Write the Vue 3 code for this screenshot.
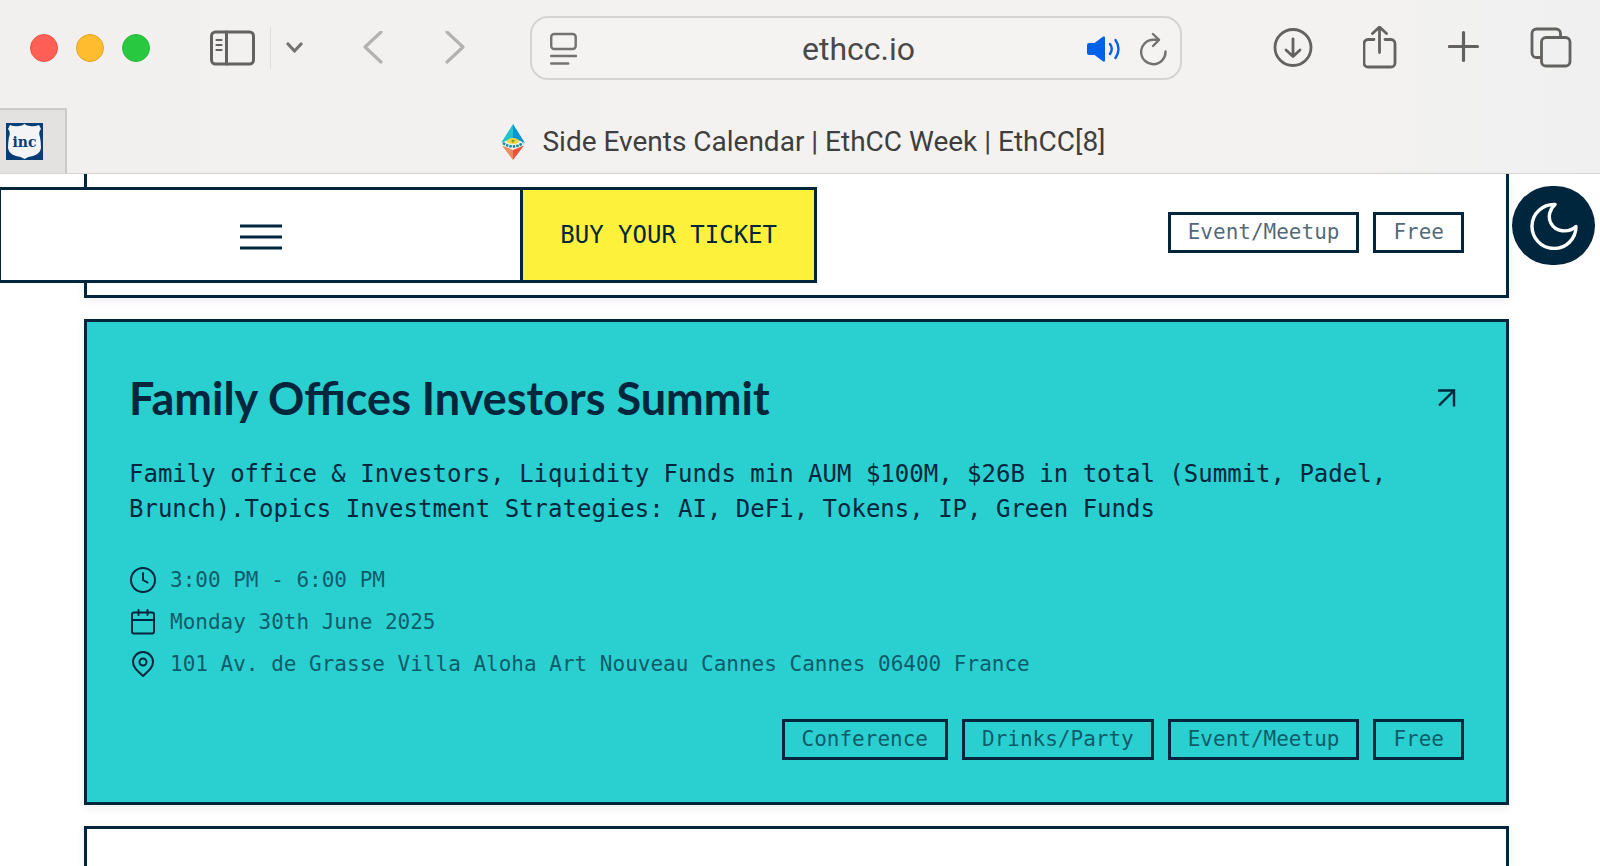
<script setup>
import { ref } from 'vue'

const address = ref('ethcc.io')
const pageTitle = 'Side Events Calendar | EthCC Week | EthCC[8]'

const previousTags = ['Event/Meetup', 'Free']

const event = {
    title: 'Family Offices Investors Summit',
    description: 'Family office & Investors, Liquidity Funds min AUM $100M, $26B in total (Summit, Padel, Brunch).Topics Investment Strategies: AI, DeFi, Tokens, IP, Green Funds',
    time: '3:00 PM - 6:00 PM',
    date: 'Monday 30th June 2025',
    place: '101 Av. de Grasse Villa Aloha Art Nouveau Cannes Cannes 06400 France',
    tags: ['Conference', 'Drinks/Party', 'Event/Meetup', 'Free']
}
</script>

<template>
    <div class="window">
        <header class="chrome">
            <div class="toolbar">
                <div class="toolbar-left">
                    <div class="lights">
                        <button class="light red" aria-label="Close"></button>
                        <button class="light yellow" aria-label="Minimize"></button>
                        <button class="light green" aria-label="Zoom"></button>
                    </div>
                    <div class="sidebar-group">
                        <button aria-label="Sidebar">
                            <svg width="45" height="36" viewBox="0 0 45 36" fill="none" stroke="#636261" stroke-width="3" stroke-linecap="round">
                                <rect x="1.5" y="2" width="42" height="32" rx="4" />
                                <path d="M16.5 2v32" />
                                <path d="M6.500 10h5M6.500 15h5M6.500 20h5" stroke-width="2.2" />
                            </svg>
                        </button>
                        <span class="divider"></span>
                        <button aria-label="Tab groups">
                            <svg width="17" height="12" viewBox="0 0 17 12" fill="none" stroke="#737271" stroke-width="3.2" stroke-linecap="round" stroke-linejoin="round">
                                <path d="M2 2l6.5 7L15 2" />
                            </svg>
                        </button>
                    </div>
                    <div class="history">
                        <button aria-label="Back">
                            <svg width="20" height="34" viewBox="0 0 20 34" fill="none" stroke="#b3b2b1" stroke-width="3.2" stroke-linecap="round" stroke-linejoin="round">
                                <path d="M18 1L2 16l16 15" />
                            </svg>
                        </button>
                        <button aria-label="Forward">
                            <svg width="20" height="34" viewBox="0 0 20 34" fill="none" stroke="#b3b2b1" stroke-width="3.2" stroke-linecap="round" stroke-linejoin="round">
                                <path d="M2 1l16 15L2 31" />
                            </svg>
                        </button>
                    </div>
                </div>

                <div class="address">
                    <button aria-label="Page menu">
                        <svg width="27" height="34" viewBox="0 0 27 34" fill="none" stroke="#737271" stroke-width="2.4" stroke-linecap="round">
                            <rect x="1.2" y="3" width="24.5" height="15" rx="3" />
                            <path d="M1.2 25h25M1.2 32.5h17" />
                        </svg>
                    </button>
                    <input v-model="address" type="text" aria-label="Address" />
                    <div class="address-actions">
                        <button aria-label="Mute tab">
                            <svg width="34" height="28" viewBox="0 0 34 28" fill="none" stroke="#0062e6" stroke-linecap="round">
                                <path d="M2 9h5.5L15.500 3Q18 1.200 18 4v22q0 2.800-2.500 1L7.500 21H2q-2 0-2-2v-8q0-2 2-2z" fill="#0062e6" stroke="none" />
                                <path d="M23 10q3.500 5 0 10M28.500 6q6 9 0 18" stroke-width="2.4" />
                            </svg>
                        </button>
                        <button aria-label="Reload">
                            <svg width="27" height="36" viewBox="0 0 27 36" fill="none" stroke="#737271" stroke-width="2.4" stroke-linecap="round" stroke-linejoin="round">
                                <path d="M25.500 21.500A12.200 12.200 0 1 1 13.500 9.800H18.500" />
                                <path d="M13 4l6 5.800-6 6.200" />
                            </svg>
                        </button>
                    </div>
                </div>

                <div class="toolbar-right">
                    <button aria-label="Downloads">
                        <svg width="40" height="44" viewBox="0 0 40 44" fill="none" stroke="#636261" stroke-width="2.8" stroke-linecap="round" stroke-linejoin="round">
                            <circle cx="20" cy="21.5" r="18" />
                            <path d="M20 13v17M13 24l7 6.500 7-6.500" />
                        </svg>
                    </button>
                    <button aria-label="Share">
                        <svg width="36" height="44" viewBox="0 0 36 44" fill="none" stroke="#636261" stroke-width="2.8" stroke-linecap="round" stroke-linejoin="round">
                            <path d="M11 13.500H5a4 4 0 0 0-4 4V37a4 4 0 0 0 4 4h23a4 4 0 0 0 4-4V17.500a4 4 0 0 0-4-4h-6" />
                            <path d="M16.500 26.500V1M9.500 7.500L16.500 1l7 6.500" />
                        </svg>
                    </button>
                    <button aria-label="New tab">
                        <svg width="32" height="44" viewBox="0 0 32 44" fill="none" stroke="#636261" stroke-width="3.2" stroke-linecap="round">
                            <path d="M15.500 6.500v28M1.500 20.500h28" />
                        </svg>
                    </button>
                    <button aria-label="Tab overview">
                        <svg width="42" height="44" viewBox="0 0 42 44" fill="none" stroke="#636261" stroke-width="2.8" stroke-linecap="round">
                            <rect x="11.5" y="11.5" width="28.5" height="28.5" rx="4.5" />
                            <path d="M11.500 31.500H6.500A4.500 4.500 0 0 1 2 27V7.500A4.500 4.500 0 0 1 6.500 3H26a4.500 4.500 0 0 1 4.500 4.500v4" />
                        </svg>
                    </button>
                </div>
            </div>

            <div class="tabs">
                <a class="pinned-tab" href="#" aria-label="Inc">
                    <span class="inc">
                        <svg width="37" height="37" viewBox="0 0 37 37" aria-hidden="true">
                            <path fill="#f4f4f6" d="M4 2q5 2 9 1 3 0 5.500-2Q21 3 24 3q4 1 9-1l2 4q-3 3-1 8 1 5 1 11-1 6-8 8-5 .5-8.500 3Q15 33.500 10 33q-7-2-8-8 0-6 1-11 2-5-1-8z" />
                        </svg>
                        <span class="inc-text">inc</span>
                    </span>
                </a>
                <a class="tab" href="#">
                    <svg width="24" height="36" viewBox="0 0 24 36" aria-hidden="true">
                        <path fill="#22c3cb" d="M12 0L0 19l12-3z" />
                        <path fill="#0795d4" d="M12 0l12 19-12-3z" />
                        <path fill="#f1f3e8" d="M0 19l12-5 12 5-12 8z" />
                        <path fill="#ee8a5f" d="M1 21.500l11 4.500V36z" />
                        <path fill="#ef5138" d="M23 21.500L12 26v10z" />
                        <path fill="none" stroke="#198a99" stroke-width="2.5" stroke-dasharray="2.5 1" d="M2 19q10 7 20 0" />
                        <ellipse cx="12" cy="17" rx="6" ry="3" fill="#f5d43b" />
                        <circle cx="12" cy="17" r="1.5" fill="#8c9a35" />
                    </svg>
                    <span>{{ pageTitle }}</span>
                </a>
            </div>
        </header>

        <main class="page">
            <nav class="site-nav">
                <button class="menu" aria-label="Menu">
                    <svg width="42" height="26" viewBox="0 0 42 26" stroke="#00263d" stroke-width="2.8">
                        <path d="M0 2h42M0 13h42M0 24h42" />
                    </svg>
                </button>
                <a class="ticket" href="#">BUY YOUR TICKET</a>
            </nav>
            <button class="theme" aria-label="Dark mode">
                <svg width="48" height="48" viewBox="0 0 48 48" fill="none" stroke="#fff" stroke-width="3.4" stroke-linejoin="round">
                    <path d="M25 2.500A22 22 0 1 0 46 24.500C38 31.500 25.500 30 20.800 21 17.500 14.500 20 7 25 2.500z" />
                </svg>
            </button>

            <article class="card card-before">
                <ul class="tags">
                    <li v-for="tag in previousTags" :key="tag">{{ tag }}</li>
                </ul>
            </article>

            <article class="card card-event">
                <div class="card-head">
                    <h2>{{ event.title }}</h2>
                    <a href="#" aria-label="Open event">
                        <svg width="18" height="18" viewBox="0 0 18 18" fill="none" stroke="#00263d" stroke-width="2.4">
                            <path d="M0 1.500h16v16M16 1.500L1 16.500" />
                        </svg>
                    </a>
                </div>
                <p class="description">{{ event.description }}</p>
                <ul class="details">
                    <li>
                        <svg width="26" height="26" viewBox="0 0 26 26" fill="none" stroke="#00263d" stroke-width="2" stroke-linecap="round">
                            <circle cx="13" cy="13" r="12" />
                            <path d="M13 6v7l4.500 2.500" />
                        </svg>
                        <span>{{ event.time }}</span>
                    </li>
                    <li>
                        <svg width="26" height="26" viewBox="0 0 26 26" fill="none" stroke="#00263d" stroke-width="2" stroke-linecap="round">
                            <rect x="2" y="3.5" width="22" height="21" rx="2" />
                            <path d="M2 11h22M8.500 1v5M17.500 1v5" />
                        </svg>
                        <span>{{ event.date }}</span>
                    </li>
                    <li>
                        <svg width="26" height="26" viewBox="0 0 26 26" fill="none" stroke="#00263d" stroke-width="2" stroke-linejoin="round">
                            <path d="M13 1a10 10 0 0 1 10 10c0 5-4 8.500-10 14C7 19.500 3 16 3 11A10 10 0 0 1 13 1z" />
                            <circle cx="13" cy="11" r="3.5" />
                        </svg>
                        <span>{{ event.place }}</span>
                    </li>
                </ul>
                <ul class="tags">
                    <li v-for="tag in event.tags" :key="tag">{{ tag }}</li>
                </ul>
            </article>

            <article class="card card-after"></article>
        </main>
    </div>
</template>

<style>
body {
    margin: 0;
    background: #fff;
}
</style>

<style scoped>
.window {
    display: flex;
    flex-direction: column;
    height: 100vh;
    overflow: hidden;
    color: #00263d;
    font-family: "DejaVu Sans Mono", monospace;
}

button {
    display: block;
    padding: 0;
    border: none;
    background: none;
    color: inherit;
}

a {
    color: inherit;
    text-decoration: none;
}

svg {
    display: block;
    flex: none;
}

ul {
    margin: 0;
    padding: 0;
    list-style: none;
}

.chrome {
    flex: none;
    border-bottom: 1px solid #d6d5d5;
    background: linear-gradient(90deg, #f1f0ef, #f3f2f1 50%, #f3f2f1 85%, #f0f0f0);
    color: #3f3e3e;
    font-family: Roboto, sans-serif;
}

.toolbar {
    display: grid;
    grid-template-columns: 530px 1fr 418px;
    align-items: center;
    padding: 16px 0;
}

.toolbar-left,
.lights,
.sidebar-group,
.history,
.toolbar-right {
    display: flex;
    align-items: center;
}

.toolbar-left {
    padding-left: 30px;
}

.lights {
    gap: 18px;
    margin-right: 60px;
}

.light {
    width: 28px;
    height: 28px;
    border-radius: 50%;
}

.red {
    border: 1px solid #e9544b;
    background: #ff5f57;
}

.yellow {
    border: 1px solid #e5a32b;
    background: #febc2e;
}

.green {
    border: 1px solid #25bc3a;
    background: #28c840;
}

.sidebar-group {
    gap: 15px;
    margin-right: 60px;
}

.divider {
    width: 1px;
    height: 42px;
    background: #dfdede;
}

.history {
    gap: 62px;
}

.address {
    display: grid;
    grid-template-columns: 80px 1fr 80px;
    align-items: center;
    box-sizing: border-box;
    height: 64px;
    padding: 0 13px 0 18px;
    border: 2px solid #d5d4d3;
    border-radius: 18px;
    background: #f4f3f2;
}

.address input {
    min-width: 0;
    padding: 2px 0 0;
    border: none;
    outline: none;
    background: transparent;
    color: #4a4949;
    font: 32px/36px Roboto, sans-serif;
    text-align: center;
}

.address-actions {
    display: flex;
    align-items: center;
    justify-content: space-between;
}

.toolbar-right {
    justify-content: space-between;
    padding: 0 28px 0 91px;
}

.tabs {
    display: flex;
    margin-top: 12px;
    height: 65px;
}

.pinned-tab {
    display: flex;
    align-items: center;
    box-sizing: border-box;
    width: 67px;
    padding-left: 6px;
    border-top: 2px solid #cbcac9;
    border-right: 2px solid #cbcac9;
    background: #e3e2e1;
}

.inc {
    display: grid;
    place-items: center;
    background: #063e75;
}

.inc > * {
    grid-area: 1 / 1;
}

.inc-text {
    color: #063e75;
    font: bold 14px/20px "DejaVu Serif", serif;
}

.tab {
    display: flex;
    flex: 1;
    align-items: center;
    justify-content: center;
    gap: 17px;
    padding: 2px 60px 0 0;
    font-size: 28px;
    line-height: 32px;
    white-space: nowrap;
}

.page {
    position: relative;
    display: flex;
    flex: 1;
    flex-direction: column;
    gap: 21px;
    padding: 0 91px 0 84px;
}

/* the site header floats above the scrolled list */
.site-nav {
    position: absolute;
    top: 13px;
    left: -2px;
    display: flex;
    box-sizing: border-box;
    width: 819px;
    max-width: 100%;
    height: 96px;
    border: 3px solid #00263d;
    background: #fff;
}

.menu {
    display: flex;
    flex: 1;
    align-items: center;
    justify-content: center;
    padding-top: 3px;
}

.ticket {
    display: flex;
    align-items: center;
    padding: 0 37px;
    border-left: 3px solid #00263d;
    background: #fef13c;
    font-size: 24px;
    white-space: nowrap;
}

.theme {
    position: absolute;
    top: 12px;
    right: 5px;
    display: flex;
    align-items: center;
    justify-content: center;
    width: 83px;
    height: 79px;
    border-radius: 40px;
    background: #00263d;
}

.card {
    flex: none;
    padding: 42px;
    border: 3px solid #00263d;
    box-shadow: 0 3px 9px #0001;
}

.card-before {
    padding-top: 38px;
    border-top: none;
}

.card-event {
    background: #2acfcf;
}

.card-after {
    flex: 1;
    padding: 0;
    border-bottom: none;
}

.card-head {
    display: flex;
    align-items: center;
    justify-content: space-between;
    height: 68px;
    padding-right: 8px;
}

h2 {
    margin: 0;
    font-family: Lato, sans-serif;
    font-size: 45px;
    font-weight: 700;
    line-height: 68px;
}

.description {
    margin: 25px 0 39px;
    font-size: 24px;
    line-height: 35px;
}

.details {
    display: grid;
    gap: 14px;
    margin-bottom: 41px;
    padding-left: 1px;
    font-size: 21px;
    line-height: 28px;
}

.details li {
    display: flex;
    align-items: center;
    gap: 14px;
}

.details span {
    color: #00263db3;
}

.tags {
    display: flex;
    flex-wrap: wrap;
    justify-content: flex-end;
    gap: 14px;
}

.tags li {
    padding: 0 17px;
    border: 3px solid #00263d;
    color: #00263db3;
    font-size: 21px;
    line-height: 35px;
}
</style>
